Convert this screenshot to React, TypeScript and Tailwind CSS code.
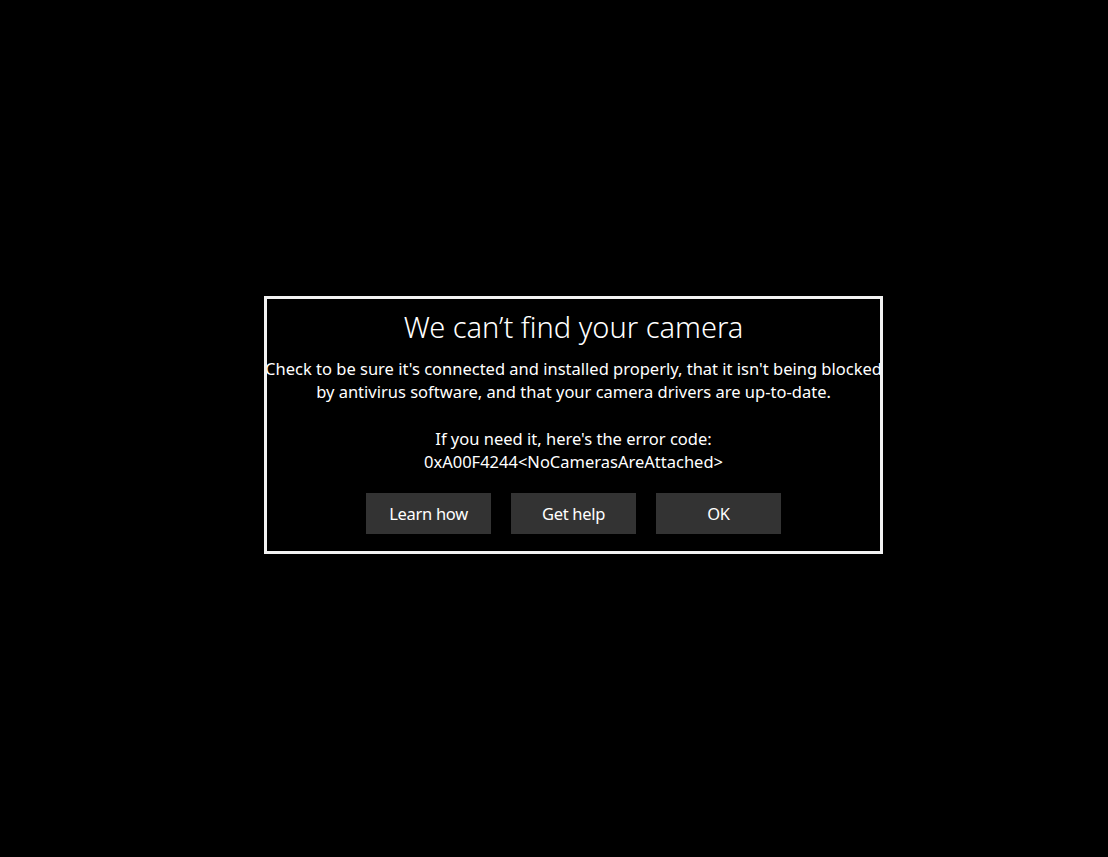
const BUTTONS = ['Learn how', 'Get help', 'OK'];

export default function App() {
  return (
    <div
      className="w-[1108px] h-[857px] bg-black text-white pt-[296px] pl-[264px]"
      style={{ fontFamily: '"Noto Sans", "Open Sans", sans-serif' }}
    >
      <div className="w-[619px] h-[258px] border-[3px] border-[#f2f2f2] overflow-hidden flex flex-col items-center">
        <h1 className="mt-[9px] text-[29px] leading-[38px] font-light whitespace-nowrap">
          We can’t find your camera
        </h1>
        <div className="mt-[11px] w-full flex justify-center">
          <p className="text-[16.5px] leading-[23.3px] text-center whitespace-nowrap">
            Check to be sure it's connected and installed properly, that it isn't being blocked
            <br />
            by antivirus software, and that your camera drivers are up-to-date.
            <br />
            <br />
            If you need it, here's the error code:
            <br />
            0xA00F4244&lt;NoCamerasAreAttached&gt;
          </p>
        </div>
        <div className="mt-[20px] flex gap-[20px]">
          {BUTTONS.map((label) => (
            <button
              key={label}
              className="w-[125px] h-[41px] bg-[#333333] text-[16.5px] text-white tracking-[-0.3px]"
            >
              {label}
            </button>
          ))}
        </div>
      </div>
    </div>
  );
}
